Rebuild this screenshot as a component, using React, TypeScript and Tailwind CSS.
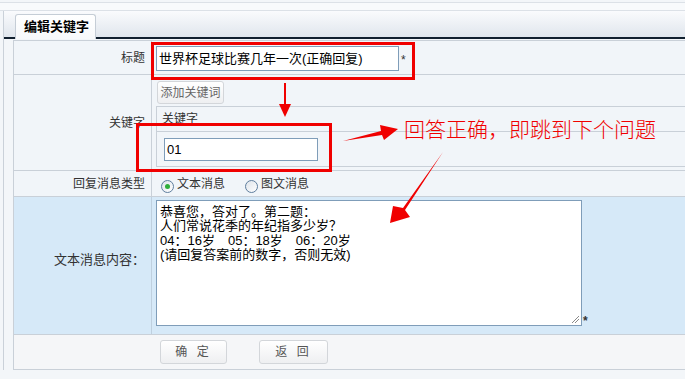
import React from "react";

function Radio({ checked }: { checked?: boolean }) {
  return (
    <span className="flex h-[13px] w-[13px] items-center justify-center rounded-full border border-[#5f7e9e] bg-gradient-to-br from-[#dfe4ea] to-white">
      {checked && <span className="h-[5px] w-[5px] rounded-full bg-[#2fae3a]" />}
    </span>
  );
}

function Btn({ label, className = "" }: { label: string; className?: string }) {
  return (
    <div
      className={`flex items-center justify-center rounded-[3px] border border-[#d3d6da] bg-gradient-to-b from-white to-[#eeeff1] text-[12px] text-[#555] ${className}`}
    >
      {label}
    </div>
  );
}

export default function App() {
  return (
    <div className="relative h-[379px] w-[685px] overflow-hidden bg-[#f3f6f9] font-['Liberation_Sans','Noto_Sans_CJK_SC',sans-serif] text-[12px] text-[#333]">
      <div className="mt-[2px] h-[9px] border-y border-[#dce1e7] bg-[#f8fafc]" />

      <div className="flex">
        <div className="w-[3px]" />
        <div className="flex-1 border-l border-[#cad1d9]">
          {/* tab bar */}
          <div className="flex h-[28px] items-end border-b-2 border-[#11202f] bg-gradient-to-b from-[#fafbfd] to-[#e0e6ed] pl-[11px]">
            <div className="relative z-10 -mb-[2px] flex h-[25px] w-[81px] items-center justify-center rounded-t-[3px] border border-b-0 border-[#c5cdd6] bg-gradient-to-b from-white to-[#f7f9fb] pl-[2px] text-[13px] font-bold text-black">
              编辑关键字
            </div>
          </div>

          {/* form table */}
          <div className="pl-[9px] pt-[1px]">
            <div className="border-y border-l border-[#c9d0d8] bg-[#f1f5f9]">
              {/* 标题 */}
              <div className="grid h-[34px] grid-cols-[138px_1fr] border-b border-[#c9d0d8]">
                <div className="flex items-center justify-end border-r border-[#c9d0d8] pr-[6px]">标题</div>
                <div className="flex items-start pl-[4px] pt-[5px]">
                  <div className="flex h-[25px] w-[243px] items-center border border-[#7f9db9] bg-white pl-[2px] text-[13px] text-black">
                    世界杯足球比赛几年一次(正确回复)
                  </div>
                  <span className="ml-[2px] mt-[5px] text-[12px]">*</span>
                </div>
              </div>

              {/* 关键字 */}
              <div className="grid h-[96px] grid-cols-[138px_1fr] border-b border-[#c9d0d8]">
                <div className="flex items-center justify-end border-r border-[#c9d0d8] pr-[6px]">关键字</div>
                <div className="flex flex-col pt-[6px]">
                  <Btn label="添加关键词" className="ml-[5px] h-[23px] w-[67px] text-[#666]" />
                  <div className="ml-[4px] mt-[2px] border-y border-l border-[#c9d0d8]">
                    <div className="flex h-[25px] items-center border-b border-[#c9d0d8] pl-[5px]">关键字</div>
                    <div className="h-[34px] pl-[7px] pt-[6px]">
                      <div className="flex h-[23px] w-[154px] items-center border border-[#7f9db9] bg-white pl-[2px] text-[13px] text-black">
                        01
                      </div>
                    </div>
                  </div>
                </div>
              </div>

              {/* 回复消息类型 */}
              <div className="grid h-[26px] grid-cols-[138px_1fr] border-b border-[#c9d0d8]">
                <div className="flex items-center justify-end border-r border-[#c9d0d8] pr-[6px]">回复消息类型</div>
                <div className="flex items-center gap-[3px] pl-[9px]">
                  <span className="mt-[5px]">
                    <Radio checked />
                  </span>
                  <span>文本消息</span>
                  <span className="ml-[17px] mt-[5px]">
                    <Radio />
                  </span>
                  <span>图文消息</span>
                </div>
              </div>

              {/* 文本消息内容 */}
              <div className="grid h-[138px] grid-cols-[138px_1fr] border-b border-[#c9d0d8] bg-[#d6e9f8]">
                <div className="flex justify-end border-r border-[#bfd0df] pr-[6px] pt-[53px] text-[13px]">文本消息内容：</div>
                <div className="flex items-start pl-[4px] pt-[3px]">
                  <div className="relative h-[126px] w-[426px] whitespace-pre border border-[#7f9db9] bg-white pl-[3px] pt-[4px] text-[13px] leading-[14.3px] text-black">
                    {"恭喜您，答对了。第二题：\n人们常说花季的年纪指多少岁？\n04：16岁　05：18岁　06：20岁\n(请回复答案前的数字，否则无效)"}
                    <svg className="absolute bottom-[1px] right-[1px]" width="9" height="9" viewBox="0 0 9 9">
                      <path d="M8 1 L1 8 M8 4 L4 8" stroke="#8a8a8a" strokeWidth="1" />
                    </svg>
                  </div>
                  <span className="ml-[1px] mt-[115px] text-[12px] font-bold leading-none">*</span>
                </div>
              </div>

              {/* buttons */}
              <div className="grid h-[34px] grid-cols-[138px_1fr] bg-[#f5f6f8]">
                <div />
                <div className="flex items-start gap-[32px] pl-[8px] pt-[5px]">
                  <Btn label="确 定" className="h-[24px] w-[67px] tracking-[3px]" />
                  <Btn label="返 回" className="h-[24px] w-[69px] tracking-[3px]" />
                </div>
              </div>
            </div>
          </div>
        </div>
      </div>

      {/* annotations */}
      <div className="absolute left-[151px] top-[42px] h-[38px] w-[264px] border-[3px] border-[#f00000]" />
      <div className="absolute left-[136px] top-[123px] h-[49px] w-[196px] border-[3px] border-[#f00000]" />
      <div className="absolute left-[404px] top-[117px] text-[21px] font-light leading-[26px] text-[#f00000]">
        回答正确，即跳到下个问题
      </div>
      <svg className="pointer-events-none absolute left-0 top-0" width="685" height="379" viewBox="0 0 685 379">
        <rect x="284" y="83" width="2" height="22" fill="#f00000" />
        <polygon points="279,104 291,104 285,117" fill="#f00000" />
        <polygon points="343,141 381,131 380,125 398,129 384,140 382,135" fill="#f00000" />
        <polygon points="443,152 403,208 393,206 390,223 410,217 405,210" fill="#f00000" />
      </svg>
    </div>
  );
}
